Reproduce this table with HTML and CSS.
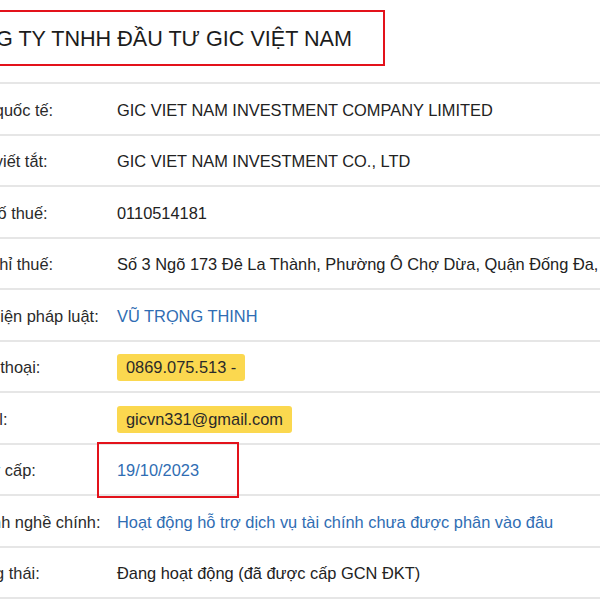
FILE: index.html
```html
<!DOCTYPE html>
<html lang="vi">
<head>
<meta charset="utf-8">
<link rel="stylesheet" href="styles.css">
</head>
<body>
<div class="page">
  <div class="head">
    <h1 class="title">CÔNG TY TNHH ĐẦU TƯ GIC VIỆT NAM</h1>
  </div>
  <div class="info">
    <div class="row"><div class="label">Tên quốc tế:</div><div class="value">GIC VIET NAM INVESTMENT COMPANY LIMITED</div></div>
    <div class="row"><div class="label">Tên viết tắt:</div><div class="value">GIC VIET NAM INVESTMENT CO., LTD</div></div>
    <div class="row"><div class="label">Mã số thuế:</div><div class="value">0110514181</div></div>
    <div class="row"><div class="label">Địa chỉ thuế:</div><div class="value">Số 3 Ngõ 173 Đê La Thành, Phường Ô Chợ Dừa, Quận Đống Đa, Thành phố Hà Nội, Việt Nam</div></div>
    <div class="row"><div class="label">Đại diện pháp luật:</div><div class="value"><a class="link" href="#">VŨ TRỌNG THINH</a></div></div>
    <div class="row"><div class="label">Điện thoại:</div><div class="value"><span class="badge">0869.075.513 -</span></div></div>
    <div class="row"><div class="label">Email:</div><div class="value"><span class="badge">gicvn331@gmail.com</span></div></div>
    <div class="row"><div class="label">Ngày cấp:</div><div class="value"><span class="link dated">19/10/2023</span></div></div>
    <div class="row"><div class="label">Ngành nghề chính:</div><div class="value"><a class="link" href="#">Hoạt động hỗ trợ dịch vụ tài chính chưa được phân vào đâu</a></div></div>
    <div class="row"><div class="label">Trạng thái:</div><div class="value">Đang hoạt động (đã được cấp GCN ĐKT)</div></div>
    <div class="row"><div class="label">Cập nhật:</div><div class="value">01/11/2023</div></div>
  </div>
</div>
</body>
</html>
```

FILE: styles.css
```css
html, body {
  margin: 0;
  padding: 0;
  background: #fff;
}
body {
  width: 600px;
  height: 600px;
  overflow: hidden;
  font-family: "Liberation Sans", Arial, sans-serif;
  color: #222;
}
.page {
  margin-left: -38px;
  width: 760px;
}
.head {
  height: 82px;
  padding-top: 10px;
  box-sizing: border-box;
}
.title {
  display: inline-block;
  margin: 0 0 0 -26px;
  padding: 15px 31px 13px 10px;
  border: 2px solid #e3121b;
  font-size: 21.6px;
  line-height: 24px;
  font-weight: 400;
  color: #1c1c1c;
  white-space: nowrap;
}
.row {
  display: grid;
  grid-template-columns: 155px 1fr;
  align-items: center;
  height: 51.5px;
  box-sizing: border-box;
  padding-top: 3px;
  border-top: 2px solid #e6e6e6;
  font-size: 16.4px;
  white-space: nowrap;
}
.label {
  color: #2a2a2a;
}
.value {
  color: #222;
}
.link {
  color: #2f6db3;
  text-decoration: none;
}
.badge {
  display: inline-block;
  background: #fbd84f;
  border-radius: 3px;
  padding: 4px 9px 5px;
  line-height: 18px;
  color: #2a2a2a;
}
.dated {
  position: relative;
}
.dated::after {
  content: "";
  position: absolute;
  left: -20px;
  right: -40px;
  top: -19px;
  bottom: -19px;
  border: 2px solid #e3121b;
}
```
